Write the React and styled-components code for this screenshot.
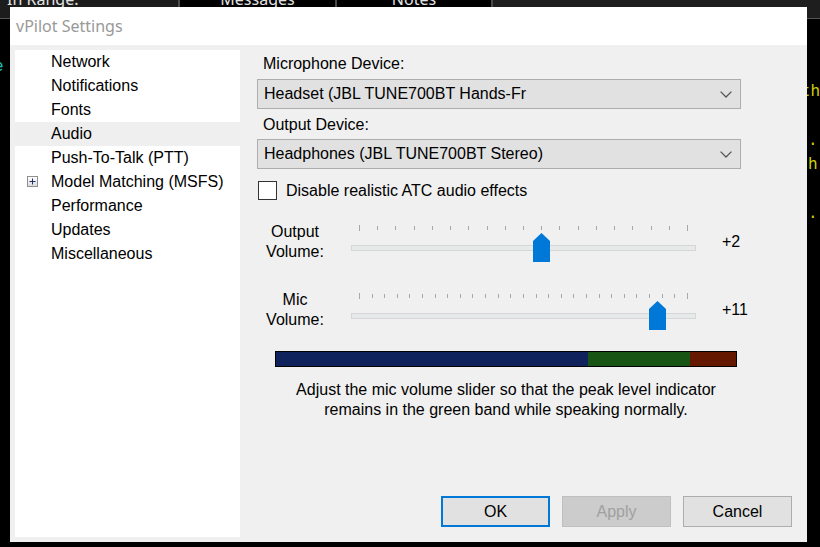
import React from "react";
import styled, { createGlobalStyle } from "styled-components";

const GlobalStyle = createGlobalStyle`
  html, body {
    margin: 0;
    padding: 0;
    background: #000;
  }
  * {
    box-sizing: border-box;
  }
`;

// === Desktop behind the dialog ===
const Desktop = styled.div`
  position: relative;
  width: 820px;
  height: 547px;
  overflow: hidden;
  background: #000;
  font-family: "Liberation Sans", Arial, sans-serif;
`;

const Header = styled.div`
  display: flex;
  height: 19px;
  border-bottom: 1px solid #555;
`;

const HeaderCell = styled.div`
  width: ${(p) => p.$w}px;
  flex: ${(p) => (p.$w ? "none" : "1")};
  background: ${(p) => p.$bg || "#000"};
  border-right: ${(p) => (p.$divider ? "2px solid #4a4a4a" : "none")};
  color: #e4e4e4;
  font-family: "Noto Sans", "Open Sans", sans-serif;
  font-size: 16px;
  line-height: 16px;
  padding-left: ${(p) => (p.$center ? 0 : 7)}px;
  text-align: ${(p) => (p.$center ? "center" : "left")};
  overflow: hidden;
  span {
    display: block;
    margin-top: -9px;
  }
`;

const Console = styled.div`
  display: flex;
  flex-direction: column;
  padding-top: 36px;
  font-family: "Liberation Mono", monospace;
  font-size: 16px;
`;

const ConsoleLine = styled.div`
  display: flex;
  height: 24.5px;
  line-height: 24.5px;
  white-space: nowrap;
`;

const ConsoleLeft = styled.div`
  width: 808px;
  color: #19c3b4;
  span {
    margin-left: -6px;
  }
`;

const ConsoleRight = styled.div`
  color: #d2d200;
`;

// === Dialog ===
const Dialog = styled.div`
  position: absolute;
  left: 10px;
  top: 7px;
  width: 797px;
  height: 535px;
  display: flex;
  flex-direction: column;
  color: #000;
  font-size: 16px;
`;

const TitleBar = styled.div`
  height: 38px;
  flex: none;
  display: flex;
  align-items: center;
  padding-left: 6px;
  background: #fff;
  color: #999;
  font-family: "Noto Sans", "Open Sans", sans-serif;
  font-size: 16px;
`;

const Body = styled.div`
  flex: 1;
  display: flex;
  padding: 5px;
  background: #f0f0f0;
`;

const Tree = styled.div`
  width: 225px;
  flex: none;
  background: #fff;
  display: flex;
  flex-direction: column;
`;

const TreeRow = styled.div`
  display: flex;
  align-items: center;
  height: 24px;
  background: ${(p) => (p.$selected ? "#efefef" : "transparent")};
`;

const Indent = styled.div`
  width: 36px;
  flex: none;
  padding-left: 12px;
  display: flex;
  align-items: center;
`;

const Expander = styled.span`
  width: 11px;
  height: 11px;
  border: 1px solid #8f8f8f;
  background: linear-gradient(#ffffff, #dcdcdc);
  display: flex;
  align-items: center;
  justify-content: center;
  margin-top: -1px;
`;

const Pane = styled.div`
  flex: 1;
  display: flex;
  flex-direction: column;
  padding: 4px 10px 10px 17px;
`;

const Label = styled.div`
  line-height: 20px;
  padding-left: 6px;
  margin-top: ${(p) => p.$mt || 0}px;
`;

const Combo = styled.div`
  width: 484px;
  height: 30px;
  margin-top: ${(p) => p.$mt || 0}px;
  display: flex;
  align-items: center;
  justify-content: space-between;
  padding: 0 8px 0 6px;
  background: #e1e1e1;
  border: 1px solid #adadad;
`;

const CheckRow = styled.label`
  display: flex;
  align-items: center;
  gap: 9px;
  height: 19px;
  margin-top: 12px;
  margin-left: 1px;
`;

const CheckBox = styled.span`
  width: 19px;
  height: 19px;
  background: #fff;
  border: 1px solid #333;
`;

const SliderRow = styled.div`
  display: flex;
  align-items: center;
  height: 40px;
  margin-top: ${(p) => p.$mt}px;
`;

const SliderLabel = styled.div`
  width: 76px;
  line-height: 20px;
  text-align: center;
`;

const SliderBox = styled.div`
  position: relative;
  width: 345px;
  height: 40px;
  margin-left: 18px;
  padding-top: 3px;
`;

const TickRow = styled.div`
  display: flex;
  justify-content: space-between;
  align-items: flex-start;
  height: 6px;
  padding: 0 8px;
`;

const Tick = styled.span`
  width: 1px;
  height: ${(p) => (p.$end ? 6 : 4)}px;
  margin-top: ${(p) => (p.$end ? 0 : 1)}px;
  background: #a8a8a8;
`;

const Track = styled.div`
  height: 6px;
  margin-top: 14px;
  background: #e7eaea;
  border: 1px solid #d6d6d6;
`;

const Thumb = styled.svg`
  position: absolute;
  top: 11px;
`;

const SliderValue = styled.div`
  margin-left: 26px;
`;

const LevelBar = styled.div`
  display: flex;
  width: 462px;
  height: 16px;
  margin: 21px 0 0 18px;
  border: 1px solid #000;
`;

const Band = styled.div`
  width: ${(p) => p.$w}px;
  flex: ${(p) => (p.$w ? "none" : "1")};
  background: ${(p) => p.$c};
`;

const Help = styled.div`
  width: 462px;
  margin: 13px 0 0 18px;
  line-height: 20px;
  text-align: center;
`;

const ButtonRow = styled.div`
  margin-top: auto;
  display: flex;
  justify-content: flex-end;
  gap: 12px;
`;

const Button = styled.button`
  width: 109px;
  height: 31px;
  font-family: "Liberation Sans", Arial, sans-serif;
  font-size: 16px;
  padding: 0;
  color: ${(p) => (p.$disabled ? "#a0a0a0" : "#000")};
  background: ${(p) => (p.$disabled ? "#cccccc" : "#e1e1e1")};
  border: ${(p) =>
    p.$default ? "2px solid #0078d7" : p.$disabled ? "1px solid #bfbfbf" : "1px solid #adadad"};
`;

const Chevron = () => (
  <svg width="12" height="7" viewBox="0 0 12 7">
    <path d="M0.6 0.6 L6 6 L11.4 0.6" fill="none" stroke="#555" strokeWidth="1.3" />
  </svg>
);

const Slider = ({ ticks, pos }) => (
  <SliderBox>
    <TickRow>
      {Array.from({ length: ticks }, (_, i) => (
        <Tick key={i} $end={i === 0 || i === ticks - 1} />
      ))}
    </TickRow>
    <Track />
    <Thumb width="17" height="29" viewBox="0 0 17 29" style={{ left: pos - 8.5 }}>
      <path d="M8.5 0 L17 8 L17 29 L0 29 L0 8 Z" fill="#0078d7" />
    </Thumb>
  </SliderBox>
);

const items = [
  "Network",
  "Notifications",
  "Fonts",
  "Audio",
  "Push-To-Talk (PTT)",
  "Model Matching (MSFS)",
  "Performance",
  "Updates",
  "Miscellaneous",
];

const consoleLines = [
  { left: "e", right: "" },
  { left: "", right: "th" },
  { left: "", right: "" },
  { left: "", right: " ." },
  { left: "", right: "h" },
  { left: "", right: "" },
  { left: "", right: " ." },
];

export default function App() {
  return (
    <Desktop>
      <GlobalStyle />
      <Header>
        <HeaderCell $w={180} $bg="#1c1c1c" $divider>
          <span>In Range.</span>
        </HeaderCell>
        <HeaderCell $w={157} $center $divider>
          <span>Messages</span>
        </HeaderCell>
        <HeaderCell $w={156} $center $divider>
          <span>Notes</span>
        </HeaderCell>
        <HeaderCell $bg="#1e1e1e" />
      </Header>
      <Console>
        {consoleLines.map((l, i) => (
          <ConsoleLine key={i}>
            <ConsoleLeft>
              <span>{l.left}</span>
            </ConsoleLeft>
            <ConsoleRight>{l.right}</ConsoleRight>
          </ConsoleLine>
        ))}
      </Console>

      <Dialog>
        <TitleBar>vPilot Settings</TitleBar>
        <Body>
          <Tree>
            {items.map((name) => (
              <TreeRow key={name} $selected={name === "Audio"}>
                <Indent>
                  {name.startsWith("Model") && (
                    <Expander>
                      <svg width="9" height="9" viewBox="0 0 9 9">
                        <path d="M1.5 4.5 H7.5 M4.5 1.5 V7.5" stroke="#1f2f6b" strokeWidth="1" />
                      </svg>
                    </Expander>
                  )}
                </Indent>
                {name}
              </TreeRow>
            ))}
          </Tree>

          <Pane>
            <Label>Microphone Device:</Label>
            <Combo $mt={5}>
              <span>Headset (JBL TUNE700BT Hands-Fr</span>
              <Chevron />
            </Combo>
            <Label $mt={6}>Output Device:</Label>
            <Combo $mt={4}>
              <span>Headphones (JBL TUNE700BT Stereo)</span>
              <Chevron />
            </Combo>
            <CheckRow>
              <CheckBox />
              Disable realistic ATC audio effects
            </CheckRow>

            <SliderRow $mt={22}>
              <SliderLabel>
                Output
                <br />
                Volume:
              </SliderLabel>
              <Slider ticks={19} pos={190.8} />
              <SliderValue>+2</SliderValue>
            </SliderRow>
            <SliderRow $mt={28}>
              <SliderLabel>
                Mic
                <br />
                Volume:
              </SliderLabel>
              <Slider ticks={27} pos={306.5} />
              <SliderValue>+11</SliderValue>
            </SliderRow>

            <LevelBar>
              <Band $w={312} $c="#10225c" />
              <Band $w={102} $c="#185414" />
              <Band $c="#641800" />
            </LevelBar>
            <Help>
              Adjust the mic volume slider so that the peak level indicator
              remains in the green band while speaking normally.
            </Help>

            <ButtonRow>
              <Button $default>OK</Button>
              <Button $disabled>Apply</Button>
              <Button>Cancel</Button>
            </ButtonRow>
          </Pane>
        </Body>
      </Dialog>
    </Desktop>
  );
}
